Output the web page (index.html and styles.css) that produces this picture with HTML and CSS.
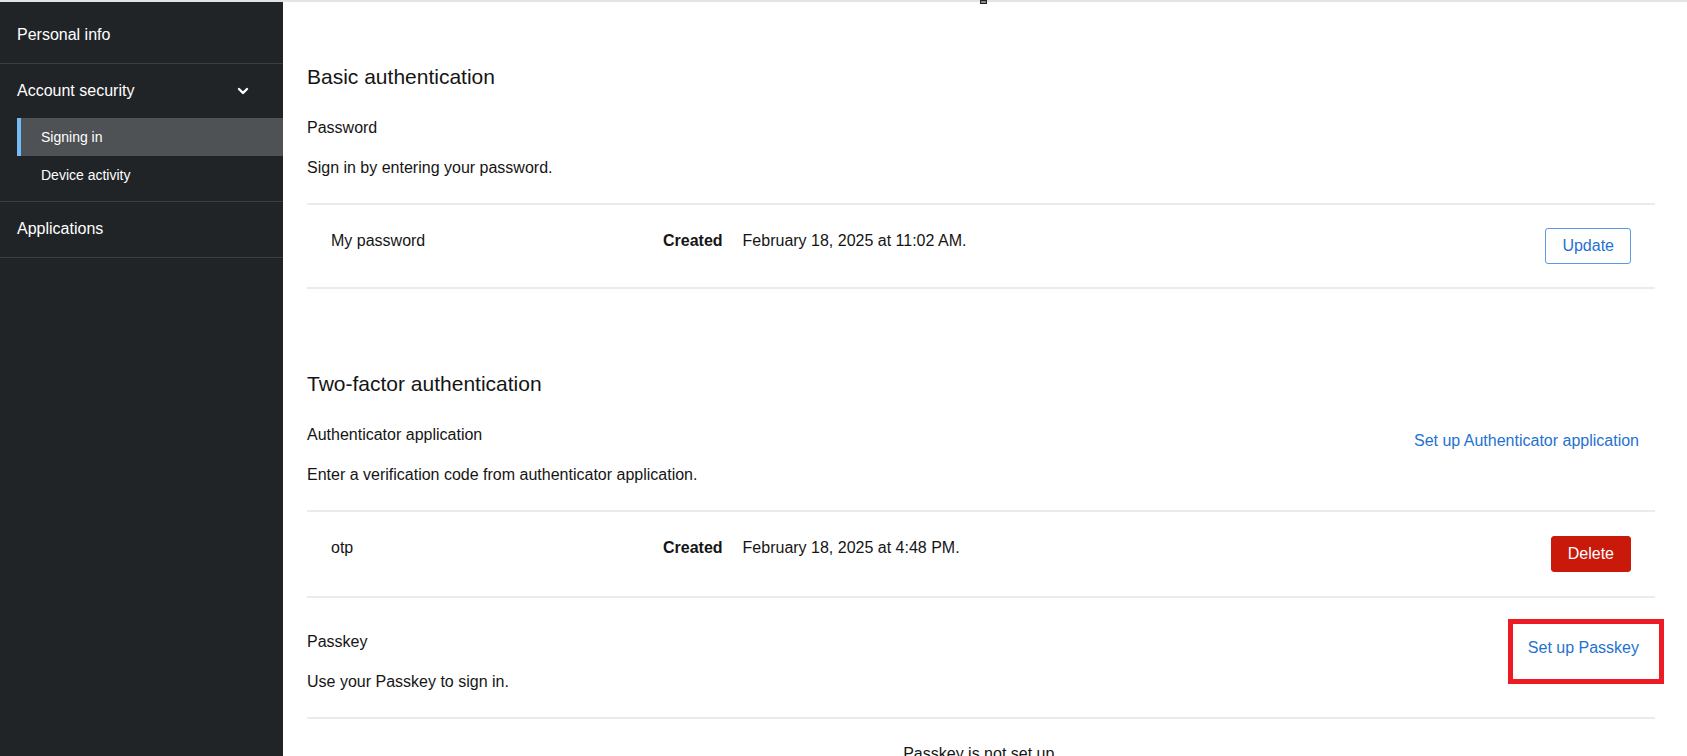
FILE: index.html
```html
<!DOCTYPE html>
<html lang="en">
<head>
<meta charset="utf-8">
<title>Signing in</title>
<link rel="stylesheet" href="styles.css">
</head>
<body>
<div class="topline"></div>
<span class="cursor-mark"></span>
<div class="layout">
  <nav class="sidebar">
    <ul class="nav-list">
      <li class="nav-item"><a class="nav-link" href="#">Personal info</a></li>
      <li class="nav-item">
        <button class="nav-toggle" type="button">
          <span>Account security</span>
          <svg class="chevron" width="12" height="12" viewBox="0 0 12 12" aria-hidden="true"><polyline points="2,4 6,8 10,4" fill="none" stroke="#ffffff" stroke-width="2.4" stroke-linecap="round" stroke-linejoin="round"/></svg>
        </button>
        <ul class="subnav">
          <li><a class="subnav-link current" href="#">Signing in</a></li>
          <li><a class="subnav-link" href="#">Device activity</a></li>
        </ul>
      </li>
      <li class="nav-item"><a class="nav-link" href="#">Applications</a></li>
    </ul>
  </nav>

  <main class="content">
    <section class="auth-section">
      <h2 class="section-title">Basic authentication</h2>
      <div class="method">
        <div class="method-head">
          <div class="method-text">
            <h3 class="method-title">Password</h3>
            <p class="method-desc">Sign in by entering your password.</p>
          </div>
        </div>
        <ul class="data-list">
          <li class="data-row">
            <span class="cell-name">My password</span>
            <span class="cell-created"><strong>Created</strong><span>February 18, 2025 at 11:02 AM.</span></span>
            <span class="cell-action"><button class="btn btn-secondary" type="button">Update</button></span>
          </li>
        </ul>
      </div>
    </section>

    <section class="auth-section second">
      <h2 class="section-title">Two-factor authentication</h2>
      <div class="method">
        <div class="method-head">
          <div class="method-text">
            <h3 class="method-title">Authenticator application</h3>
            <p class="method-desc">Enter a verification code from authenticator application.</p>
          </div>
          <a class="btn-link" href="#">Set up Authenticator application</a>
        </div>
        <ul class="data-list">
          <li class="data-row tall">
            <span class="cell-name">otp</span>
            <span class="cell-created"><strong>Created</strong><span>February 18, 2025 at 4:48 PM.</span></span>
            <span class="cell-action"><button class="btn btn-danger" type="button">Delete</button></span>
          </li>
        </ul>
      </div>

      <div class="method method-next">
        <div class="method-head">
          <div class="method-text">
            <h3 class="method-title">Passkey</h3>
            <p class="method-desc">Use your Passkey to sign in.</p>
          </div>
          <a class="btn-link highlighted" href="#">Set up Passkey</a>
        </div>
        <ul class="data-list">
          <li class="data-row empty">
            <span class="empty-text">Passkey is not set up.</span>
          </li>
        </ul>
      </div>
    </section>
  </main>
</div>
</body>
</html>
```

FILE: styles.css
```css
* {
  box-sizing: border-box;
}

html, body {
  margin: 0;
  padding: 0;
  height: 100%;
  overflow: hidden;
}

body {
  font-family: "Liberation Sans", Arial, sans-serif;
  font-size: 16px;
  line-height: 24px;
  color: #151515;
  background: #ffffff;
}

.topline {
  height: 2px;
  background: #e4e4e4;
}

.cursor-mark {
  position: absolute;
  top: 0;
  left: 980px;
  width: 7px;
  height: 4px;
  border: 1.5px solid #222;
  background: #888;
}

.layout {
  display: flex;
  height: calc(100% - 2px);
}

/* Sidebar */
.sidebar {
  width: 283px;
  flex: 0 0 283px;
  background: #212427;
  color: #ffffff;
  padding-top: 5px;
}

.nav-list,
.subnav,
.data-list {
  list-style: none;
  margin: 0;
  padding: 0;
}

.nav-item {
  border-bottom: 1px solid #3c3f42;
}

.nav-link {
  display: block;
  padding: 16px 17px;
  color: #ffffff;
  text-decoration: none;
  font-size: 16px;
  line-height: 24px;
}

.nav-item:last-child .nav-link {
  padding-top: 15px;
}

.nav-toggle {
  display: flex;
  width: 100%;
  align-items: center;
  justify-content: space-between;
  padding: 15px 34px 15px 17px;
  background: none;
  border: 0;
  color: #ffffff;
  font: inherit;
  line-height: 24px;
  text-align: left;
}

.chevron {
  display: block;
}

.subnav {
  padding-bottom: 7px;
}

.subnav-link {
  display: block;
  margin-left: 17px;
  padding: 8px 0 8px 20px;
  border-left: 4px solid transparent;
  color: #ffffff;
  text-decoration: none;
  font-size: 14px;
  line-height: 22px;
}

.subnav-link.current {
  background: #4f5255;
  border-left-color: #73bcf7;
}

/* Content */
.content {
  flex: 1;
  padding: 60px 32px 0 24px;
}

.section-title {
  margin: 0;
  font-size: 21px;
  line-height: 30px;
  font-weight: 400;
}

.auth-section.second {
  margin-top: 80px;
}

.method {
  margin-top: 24px;
}

.method.method-next {
  margin-top: 32px;
}

.method-head {
  display: flex;
  justify-content: space-between;
  align-items: flex-start;
}

.method-title {
  margin: 0;
  font-size: 16px;
  line-height: 24px;
  font-weight: 400;
}

.method-desc {
  margin: 16px 0 0;
  font-size: 16px;
  line-height: 24px;
}

.btn-link {
  position: relative;
  display: inline-block;
  padding: 6px 16px;
  color: #1f72d0;
  text-decoration: none;
  font-size: 16px;
  line-height: 24px;
}

.btn-link.highlighted::after {
  content: "";
  position: absolute;
  left: -4px;
  right: -9px;
  top: -11px;
  bottom: -18px;
  border: 5px solid #ed1c24;
}

.data-list {
  margin-top: 23px;
  border-top: 2px solid #ebebeb;
}

.data-row {
  display: grid;
  grid-template-columns: 332px 1fr auto;
  align-items: start;
  min-height: 84px;
  padding: 0 24px;
  border-bottom: 2px solid #ebebeb;
}

.data-row.tall {
  min-height: 86px;
}

.cell-name,
.cell-created {
  padding-top: 24px;
}

.cell-created {
  display: flex;
  gap: 20px;
}

.cell-created strong {
  font-weight: 700;
}

.cell-action {
  align-self: center;
}

.btn {
  display: inline-block;
  height: 36px;
  padding: 0 16px;
  border-radius: 3px;
  font: inherit;
  font-size: 16px;
  line-height: 24px;
}

.btn-secondary {
  background: #ffffff;
  color: #1f72d0;
  border: 1px solid #5b9ae0;
}

.btn-danger {
  background: #c9190b;
  color: #ffffff;
  border: 1px solid #c9190b;
}

.data-row.empty {
  display: block;
  text-align: center;
  padding-top: 23px;
}
```
